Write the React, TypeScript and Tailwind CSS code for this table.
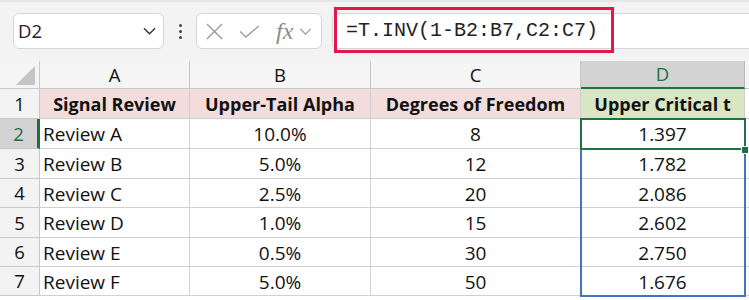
const cols = ["A", "B", "C", "D"];

const rows = [
  { n: 1, cells: ["Signal Review", "Upper-Tail Alpha", "Degrees of Freedom", "Upper Critical t"] },
  { n: 2, cells: ["Review A", "10.0%", "8", "1.397"] },
  { n: 3, cells: ["Review B", "5.0%", "12", "1.782"] },
  { n: 4, cells: ["Review C", "2.5%", "20", "2.086"] },
  { n: 5, cells: ["Review D", "1.0%", "15", "2.602"] },
  { n: 6, cells: ["Review E", "0.5%", "30", "2.750"] },
  { n: 7, cells: ["Review F", "5.0%", "50", "1.676"] },
];

const rowHeights = ["h-[30px]", "h-[30px]", "h-[30px]", "h-[29px]", "h-[30px]", "h-[29px]", "h-[29px]"];
const colWidths = ["w-[150px]", "w-[181px]", "w-[210px]", "w-[164px]"];

function Chevron({ className }: { className: string }) {
  return (
    <svg viewBox="0 0 14 8" className={className} fill="none" stroke="currentColor" strokeWidth="1.5">
      <path d="M1 1l6 6 6-6" />
    </svg>
  );
}

export default function App() {
  return (
    <div className="w-[749px] h-[300px] overflow-hidden bg-white font-['Open_Sans',sans-serif] text-[#111]">
      {/* formula bar */}
      <div className="relative h-[61px] bg-[#f3f3f3] border-t-2 border-[#e6e6e6] flex items-start pt-[11px]">
        <div className="ml-[13px] w-[151px] h-[36px] bg-white border border-[#d6d6d6] rounded-[6px] flex items-center justify-between pl-[4px] pr-[7px]">
          <span className="text-[18.5px] text-[#222]">D2</span>
          <Chevron className="w-[13px] h-[8px] text-[#333]" />
        </div>
        <div className="w-[32px] h-[36px] flex flex-col items-center justify-center gap-[3px]">
          <span className="w-[3px] h-[3px] bg-[#444] rounded-full" />
          <span className="w-[3px] h-[3px] bg-[#444] rounded-full" />
          <span className="w-[3px] h-[3px] bg-[#444] rounded-full" />
        </div>
        <div className="w-[126px] h-[36px] bg-white border border-[#d6d6d6] rounded-[6px] flex items-center pl-[9px] text-[#9a9a9a]">
          <svg viewBox="0 0 18 18" className="w-[17px] h-[17px]" fill="none" stroke="currentColor" strokeWidth="1.4">
            <path d="M1 1l16 16M17 1L1 17" />
          </svg>
          <svg viewBox="0 0 22 14" className="ml-[16px] w-[21px] h-[13px]" fill="none" stroke="currentColor" strokeWidth="1.4">
            <path d="M1 7l6 6L21 1" />
          </svg>
          <span className="ml-[16px] font-['Liberation_Serif',serif] italic text-[24px] leading-none text-[#8a8a8a]">fx</span>
          <Chevron className="ml-[6px] w-[13px] h-[7px] text-[#9a9a9a]" />
        </div>
        <div className="ml-[10px] flex-1 h-[36px] bg-white border-y border-l border-[#d6d6d6] rounded-l-[6px] flex items-center pl-[13px]">
          <span className="font-['Liberation_Mono',monospace] text-[20px] text-[#222]">=T.INV(1-B2:B7,C2:C7)</span>
        </div>
        <div className="absolute left-[334px] top-[5px] w-[280px] h-[46px] border-[3px] border-[#e0194a]" />
      </div>

      {/* grid */}
      <div className="relative">
        <div className="flex h-[28px] bg-[#f5f5f5]">
          <div className="relative w-[40px] border-r border-b border-[#c8c8c8]">
            <svg viewBox="0 0 20 20" className="absolute right-[4px] bottom-[3px] w-[19px] h-[19px]">
              <path d="M20 0V20H0Z" fill="#c4c4c4" />
            </svg>
          </div>
          {cols.map((c, i) => (
            <div
              key={c}
              className={`${colWidths[i]} flex items-center justify-center text-[18.5px] border-r ${
                c === "D"
                  ? "bg-[#d3d3d3] text-[#1e7145] border-b-2 border-b-[#1e7145] border-r-[#b9b9b9]"
                  : "border-b border-[#c8c8c8]"
              }`}
            >
              {c}
            </div>
          ))}
          <div className="flex-1 border-b border-[#c8c8c8]" />
        </div>

        {rows.map((r, ri) => (
          <div key={r.n} className={`flex ${rowHeights[ri]}`}>
            <div
              className={`w-[40px] flex items-center justify-center text-[18.5px] border-b border-[#c8c8c8] ${
                r.n === 2
                  ? "bg-[#d3d3d3] text-[#1e7145] border-r-[3px] border-r-[#1e7145]"
                  : "bg-[#f3f3f3] border-r"
              }`}
            >
              {r.n}
            </div>
            {r.cells.map((v, ci) => {
              const header = r.n === 1;
              const bg = header ? (ci === 3 ? "bg-[#d9e6c3]" : "bg-[#f2dddc]") : "bg-white";
              const align = ci === 0 && !header ? "justify-start pl-[3px]" : "justify-center";
              return (
                <div
                  key={ci}
                  className={`${colWidths[ci]} ${bg} ${align} flex items-center pt-[2px] border-r border-b border-[#d0d0d0] ${
                    header ? "font-bold text-[18px]" : "text-[19px]"
                  }`}
                >
                  {v}
                </div>
              );
            })}
            <div className="flex-1 border-b border-[#d0d0d0]" />
          </div>
        ))}

        {/* active cell D2 */}
        <div className="absolute left-[580px] top-[57px] w-[166px] h-[32px] border-2 border-[#1e7145]" />
        {/* range D3:D7 */}
        <div className="absolute left-[580px] top-[89px] w-[166px] h-[147px] border-2 border-[#4472c4] border-t-0" />
        <div className="absolute z-10 left-[741px] top-[85px] w-[8px] h-[8px] bg-[#1e7145] border border-white" />
      </div>
    </div>
  );
}
